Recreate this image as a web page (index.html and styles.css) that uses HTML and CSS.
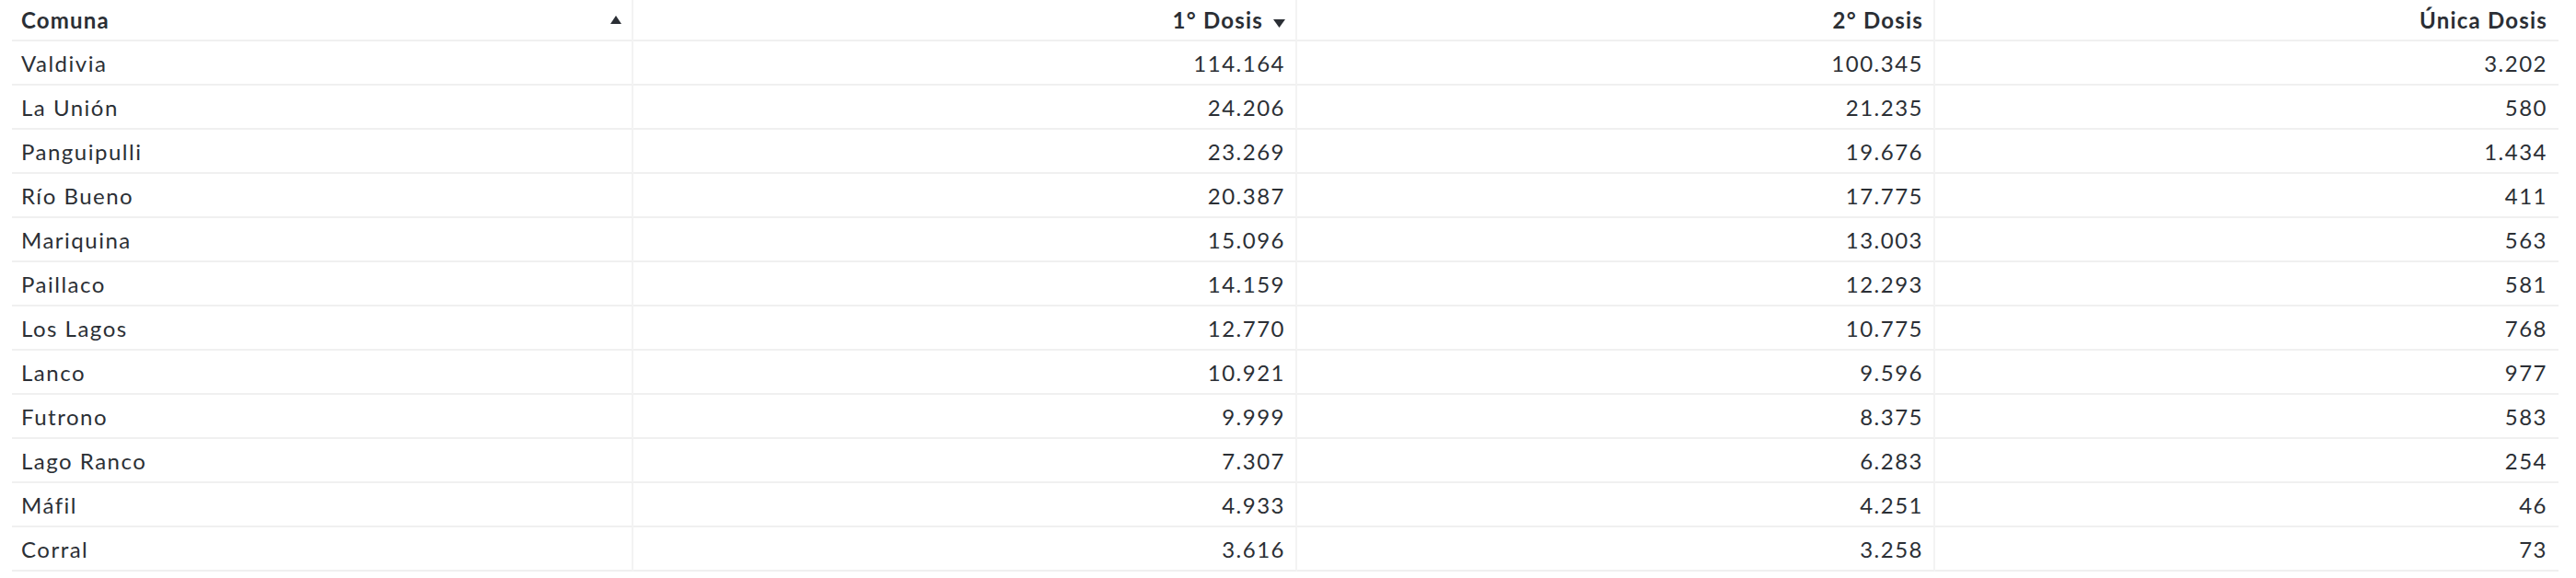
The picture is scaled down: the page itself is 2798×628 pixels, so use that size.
FILE: index.html
```html
<!DOCTYPE html>
<html lang="es">
<head>
<meta charset="utf-8">
<title>Vacunación por comuna</title>
<link rel="stylesheet" href="styles.css">
</head>
<body>
<table class="vtable">
  <colgroup>
    <col class="c1"><col class="c2"><col class="c3"><col class="c4">
  </colgroup>
  <thead>
    <tr>
      <th class="left"><div class="th-flex"><span>Comuna</span><svg class="sort up" viewBox="0 0 12 9" width="12" height="9"><polygon points="6,0 12,9 0,9"/></svg></div></th>
      <th class="num"><span>1° Dosis</span><svg class="sort down" viewBox="0 0 13 9" width="13" height="9"><polygon points="0,0 13,0 6.5,9"/></svg></th>
      <th class="num">2° Dosis</th>
      <th class="num">Única Dosis</th>
    </tr>
  </thead>
  <tbody>
    <tr><td>Valdivia</td><td class="num">114.164</td><td class="num">100.345</td><td class="num">3.202</td></tr>
    <tr><td>La Unión</td><td class="num">24.206</td><td class="num">21.235</td><td class="num">580</td></tr>
    <tr><td>Panguipulli</td><td class="num">23.269</td><td class="num">19.676</td><td class="num">1.434</td></tr>
    <tr><td>Río Bueno</td><td class="num">20.387</td><td class="num">17.775</td><td class="num">411</td></tr>
    <tr><td>Mariquina</td><td class="num">15.096</td><td class="num">13.003</td><td class="num">563</td></tr>
    <tr><td>Paillaco</td><td class="num">14.159</td><td class="num">12.293</td><td class="num">581</td></tr>
    <tr><td>Los Lagos</td><td class="num">12.770</td><td class="num">10.775</td><td class="num">768</td></tr>
    <tr><td>Lanco</td><td class="num">10.921</td><td class="num">9.596</td><td class="num">977</td></tr>
    <tr><td>Futrono</td><td class="num">9.999</td><td class="num">8.375</td><td class="num">583</td></tr>
    <tr><td>Lago Ranco</td><td class="num">7.307</td><td class="num">6.283</td><td class="num">254</td></tr>
    <tr><td>Máfil</td><td class="num">4.933</td><td class="num">4.251</td><td class="num">46</td></tr>
    <tr><td>Corral</td><td class="num">3.616</td><td class="num">3.258</td><td class="num">73</td></tr>
  </tbody>
</table>
</body>
</html>
```
FILE: styles.css
```css
html, body {
  margin: 0;
  padding: 0;
  background: #ffffff;
}
body {
  font-family: Lato, "Noto Sans", sans-serif;
  color: #2b2f35;
}
.vtable {
  margin-left: 13px;
  border-collapse: separate;
  border-spacing: 0;
  table-layout: fixed;
  width: 2766px;
}
.c1 { width: 675px; }
.c2 { width: 721px; }
.c3 { width: 693px; }
.c4 { width: 677px; }

.vtable th,
.vtable td {
  padding: 0 11px 0 10px;
  border-bottom: 2px solid #f0f0f0;
  border-right: 2px solid #f3f3f3;
  white-space: nowrap;
  vertical-align: middle;
}
.vtable th:last-child,
.vtable td:last-child {
  border-right: none;
  padding-right: 12px;
}
.vtable th {
  height: 43px;
  font-size: 24px;
  font-weight: 700;
  letter-spacing: 1.2px;
  text-align: right;
}
.vtable th.left { text-align: left; }
.vtable td {
  height: 46px;
  font-size: 24px;
  letter-spacing: 1.5px;
  text-align: left;
}
.vtable td.num { text-align: right; }
.th-flex {
  display: flex;
  align-items: center;
  justify-content: space-between;
}
.sort {
  fill: #2b2f35;
  display: inline-block;
}
.sort.down {
  margin-left: 11px;
  vertical-align: 1px;
}
.sort.up {
  margin-right: 0;
}
```
